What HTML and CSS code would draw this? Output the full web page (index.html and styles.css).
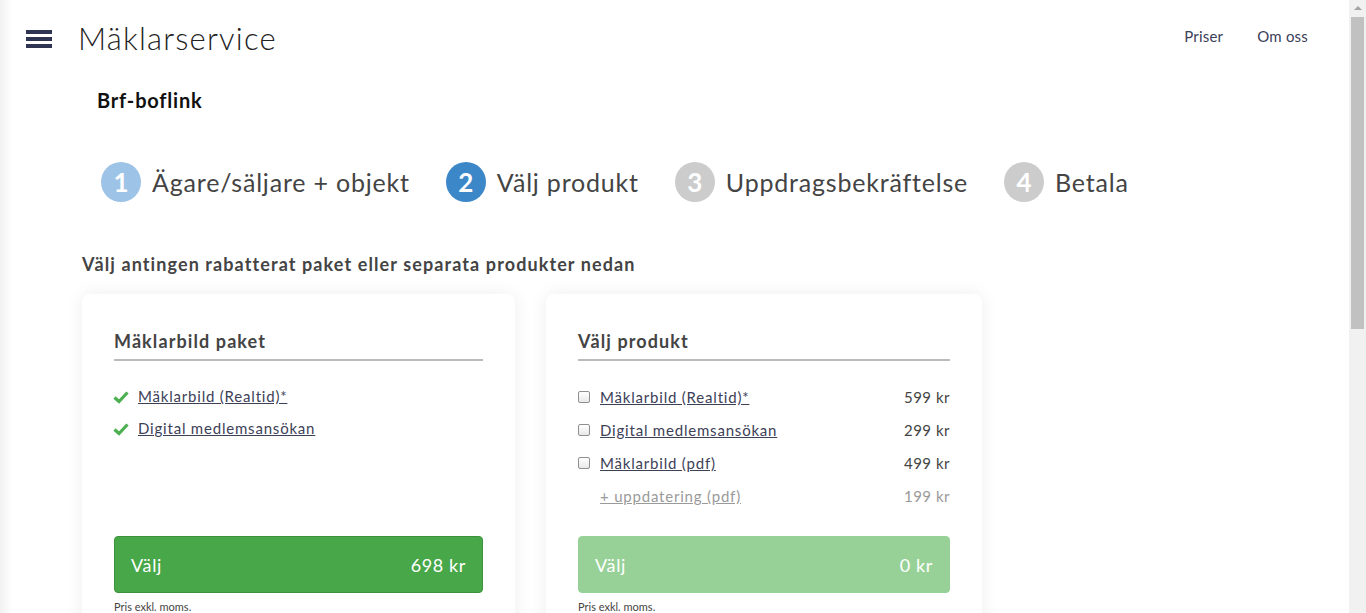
FILE: index.html
```html
<!DOCTYPE html>
<html lang="sv">
<head>
<meta charset="utf-8">
<title>Mäklarservice</title>
<link rel="stylesheet" href="styles.css">
</head>
<body>
<header class="topbar">
  <div class="brand">
    <button class="burger" aria-label="Meny"><span></span><span></span><span></span></button>
    <span class="logo">Mäklarservice</span>
  </div>
  <nav class="nav">
    <a href="#">Priser</a>
    <a href="#">Om oss</a>
  </nav>
</header>

<main class="main">
  <h2 class="org">Brf-boflink</h2>

  <ol class="steps">
    <li class="step done"><span class="num">1</span><span class="label">Ägare/säljare + objekt</span></li>
    <li class="step active"><span class="num">2</span><span class="label">Välj produkt</span></li>
    <li class="step"><span class="num">3</span><span class="label">Uppdragsbekräftelse</span></li>
    <li class="step"><span class="num">4</span><span class="label">Betala</span></li>
  </ol>

  <p class="lead">Välj antingen rabatterat paket eller separata produkter nedan</p>

  <div class="cards">
    <section class="card">
      <h3 class="card-title">Mäklarbild paket</h3>
      <ul class="items">
        <li class="item"><svg class="check" viewBox="0 0 16 14" width="16" height="14"><path d="M1.5 7.5 L6 11.5 L14.5 2.5" fill="none" stroke="#4caf50" stroke-width="3.2"/></svg><a href="#">Mäklarbild (Realtid)*</a></li>
        <li class="item"><svg class="check" viewBox="0 0 16 14" width="16" height="14"><path d="M1.5 7.5 L6 11.5 L14.5 2.5" fill="none" stroke="#4caf50" stroke-width="3.2"/></svg><a href="#">Digital medlemsansökan</a></li>
      </ul>
      <button class="pick"><span>Välj</span><span>698 kr</span></button>
      <p class="note">Pris exkl. moms.</p>
    </section>

    <section class="card card-wide">
      <h3 class="card-title">Välj produkt</h3>
      <ul class="items products">
        <li class="item"><span class="box"></span><a href="#">Mäklarbild (Realtid)*</a><span class="price">599 kr</span></li>
        <li class="item"><span class="box"></span><a href="#">Digital medlemsansökan</a><span class="price">299 kr</span></li>
        <li class="item"><span class="box"></span><a href="#">Mäklarbild (pdf)</a><span class="price">499 kr</span></li>
        <li class="item muted"><span class="nobox"></span><a href="#">+ uppdatering (pdf)</a><span class="price">199 kr</span></li>
      </ul>
      <button class="pick disabled"><span>Välj</span><span>0 kr</span></button>
      <p class="note">Pris exkl. moms.</p>
    </section>
  </div>
</main>

<div class="scrollbar" aria-hidden="true">
  <span class="arrow"></span>
  <span class="thumb"></span>
</div>
</body>
</html>
```

FILE: styles.css
```css
* { box-sizing: border-box; }
html, body { margin: 0; padding: 0; }
body {
  font-family: "Lato", "Open Sans", sans-serif;
  color: #444;
  background: linear-gradient(to right, #f1f1f1 0, #ffffff 12px);
  padding-right: 17px;
}
a { color: inherit; }

.topbar {
  height: 76px;
  display: flex;
  align-items: center;
  justify-content: space-between;
  padding: 0 41px 0 26px;
}
.brand { display: flex; align-items: center; }
.burger {
  width: 26px;
  height: 18px;
  padding: 0;
  border: 0;
  background: none;
  display: flex;
  flex-direction: column;
  justify-content: space-between;
  margin-top: 2px;
}
.burger span { display: block; height: 4px; background: #2f3452; }
.logo {
  margin-left: 26px;
  font-size: 31px;
  font-weight: 300;
  color: #222;
  letter-spacing: 1.2px;
}
.nav { display: flex; gap: 34px; margin-top: -4px; }
.nav a {
  text-decoration: none;
  color: #3b4058;
  font-size: 15px;
  letter-spacing: 0.2px;
}

.main { padding: 0 0 0 82px; }
.org {
  margin: 12px 0 0 15px;
  font-size: 20px;
  font-weight: 700;
  color: #111;
  letter-spacing: 0.8px;
}

.steps {
  list-style: none;
  margin: 50px 0 0 19px;
  padding: 0;
  display: flex;
  gap: 36px;
  align-items: center;
}
.step { display: flex; align-items: center; gap: 11px; }
.num {
  width: 40px; height: 40px;
  border-radius: 50%;
  background: #cccccc;
  color: #fff;
  font-weight: 700;
  font-size: 26px;
  display: flex; align-items: center; justify-content: center;
}
.step.done .num { background: #9dc3e6; }
.step.active .num { background: #3c87c8; }
.label { font-size: 25px; color: #444; letter-spacing: 0.8px; }

.lead {
  margin: 51px 0 0 0;
  font-size: 18px;
  font-weight: 700;
  letter-spacing: 1.1px;
  color: #444;
}

.cards { display: flex; gap: 31px; margin-top: 19px; }
.card {
  width: 433px;
  background: #fff;
  border-radius: 8px;
  box-shadow: 0 0 18px rgba(0,0,0,0.07);
  padding: 36px 32px 40px;
  display: flex;
  flex-direction: column;
}
.card-wide { width: 436px; }
.card-title {
  margin: 0;
  font-size: 18px;
  font-weight: 700;
  letter-spacing: 1.1px;
  color: #444;
  padding-bottom: 7px;
  border-bottom: 2px solid #bbbbbb;
}
.items {
  list-style: none;
  margin: 19px 0 0;
  padding: 0;
  height: 156px;
}
.item {
  display: flex;
  align-items: center;
  height: 32px;
  font-size: 15px;
  letter-spacing: 0.8px;
  color: #3d4157;
}
.products .item { height: 33px; }
.check { margin: 2px 9px 0 -1px; }
.item a { color: #3d4157; }
.box {
  width: 12px; height: 12px;
  border: 1px solid #8f8f8f;
  border-radius: 2px;
  background: linear-gradient(#fff, #e8e8e8);
  margin: 0 10px 0 0;
}
.nobox { width: 12px; margin-right: 10px; }
.price { margin-left: auto; color: #444; letter-spacing: 0.5px; }
.item.muted a, .item.muted .price { color: #9a9a9a; }

.pick {
  height: 57px;
  border-radius: 4px;
  border: 1px solid #3c913c;
  background: #48a748;
  color: #fff;
  font-family: inherit;
  font-size: 18px;
  letter-spacing: 0.6px;
  display: flex;
  align-items: center;
  justify-content: space-between;
  padding: 0 16px 0 16px;
}
.pick.disabled { background: #97d197; border-color: #97d197; }
.note { margin: 7px 0 0; font-size: 11px; color: #444; }

.scrollbar {
  position: fixed;
  top: 0; right: 0; bottom: 0;
  width: 17px;
  background: #f1f1f1;
}
.scrollbar .arrow {
  position: absolute;
  top: 6px; left: 5px;
  width: 0; height: 0;
  border-left: 4px solid transparent;
  border-right: 4px solid transparent;
  border-bottom: 4px solid #a3a3a3;
}
.scrollbar .thumb {
  position: absolute;
  top: 17px; left: 2px; right: 2px;
  height: 312px;
  background: #c1c1c1;
}
```
